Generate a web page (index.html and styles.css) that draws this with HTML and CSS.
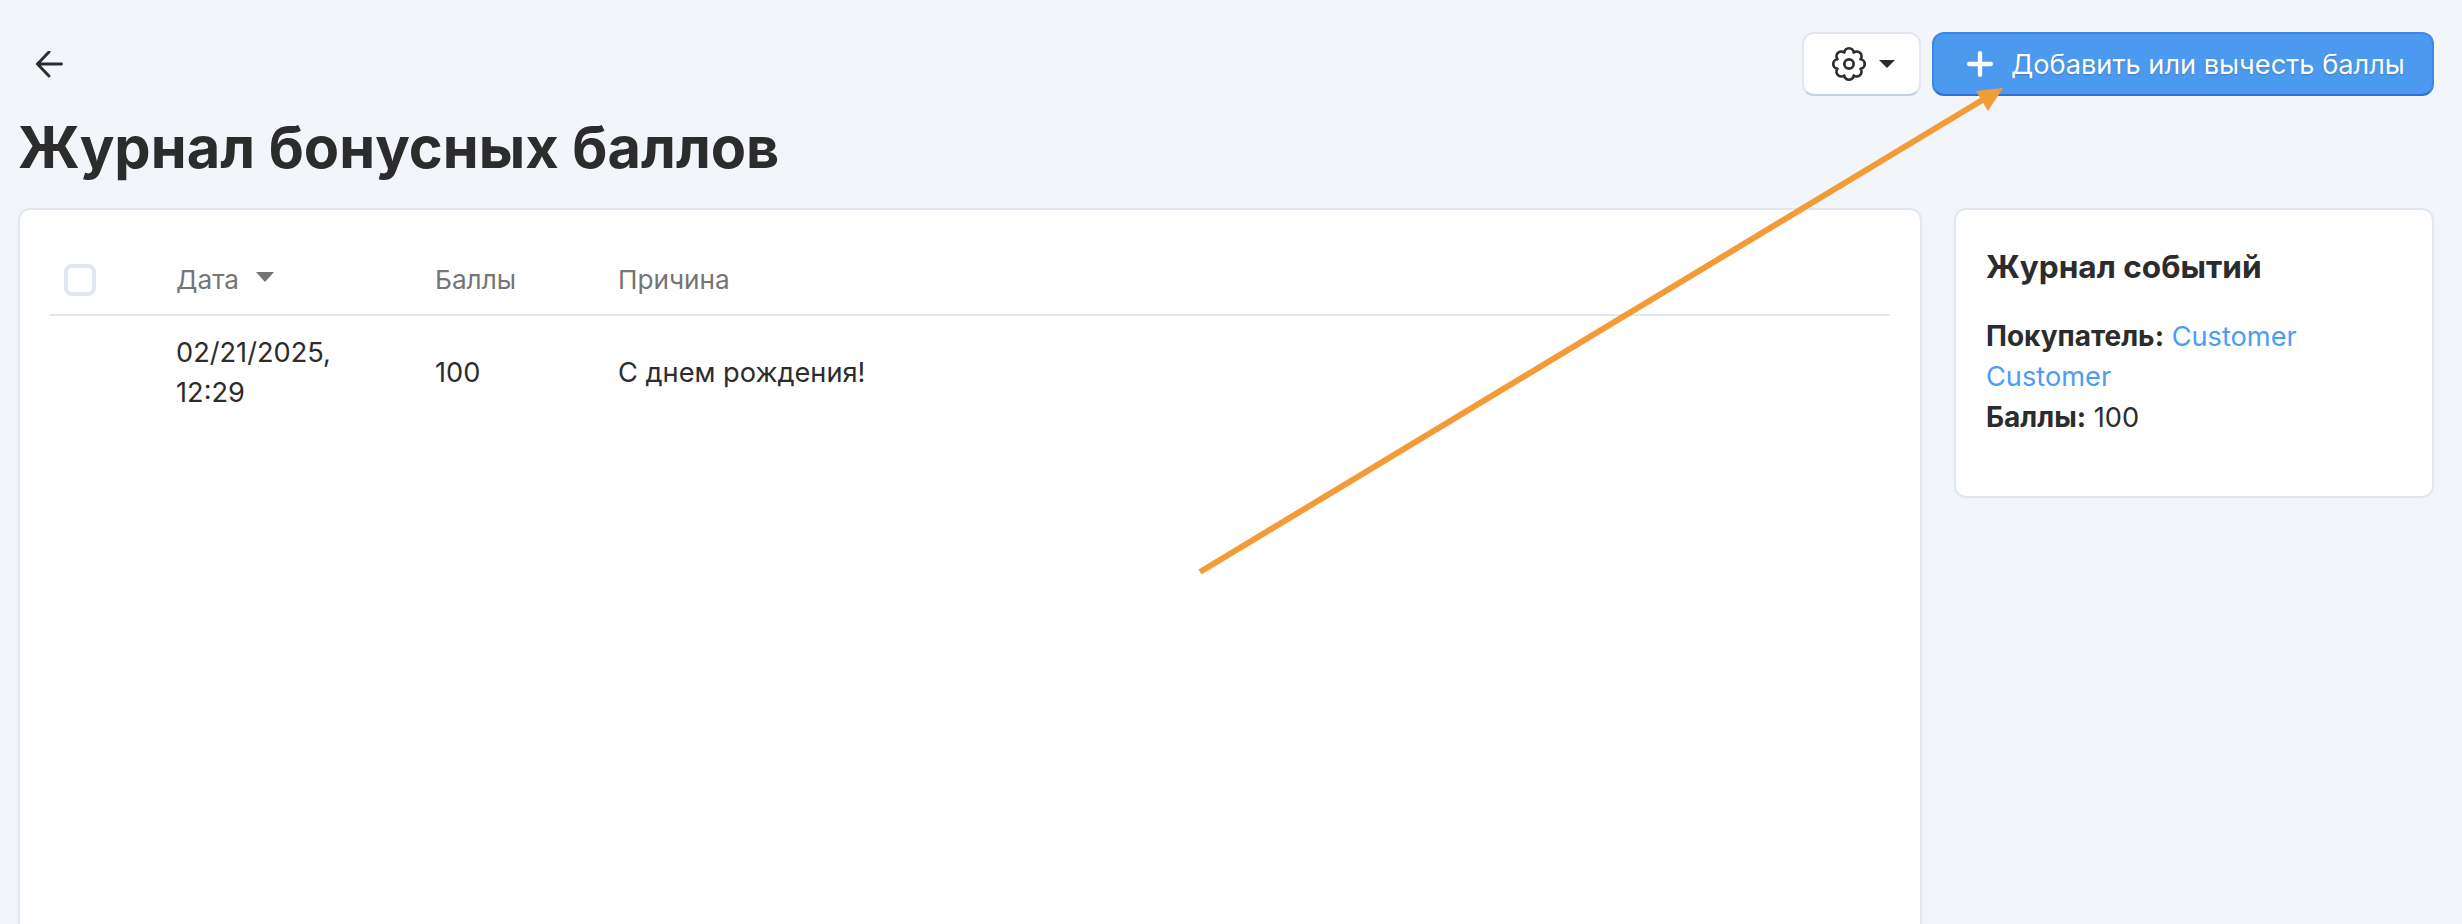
FILE: index.html
```html
<!DOCTYPE html>
<html lang="ru">
<head>
<meta charset="utf-8">
<title>Журнал бонусных баллов</title>
<link rel="stylesheet" href="styles.css">
</head>
<body>
<div class="page">
  <header class="topbar">
    <a class="back" href="#" aria-label="Назад">
      <svg class="back-icon" viewBox="0 0 28 28" fill="none" stroke="currentColor" stroke-width="3" stroke-linecap="round" stroke-linejoin="round"><path d="M27 13.5H2M14 1 2 13.5 14 26"/></svg>
    </a>
    <div class="actions">
      <button class="btn btn-settings" aria-label="Настройки">
        <svg class="gear" viewBox="0 0 24 24" fill="none" stroke="currentColor" stroke-width="1.8" stroke-linejoin="round"><path d="M19.67 8.82A3.2 3.2 0 0 1 19.67 15.18 3.2 3.2 0 0 1 15.18 19.67 3.2 3.2 0 0 1 8.82 19.67 3.2 3.2 0 0 1 4.33 15.18 3.2 3.2 0 0 1 4.33 8.82 3.2 3.2 0 0 1 8.82 4.33 3.2 3.2 0 0 1 15.18 4.33 3.2 3.2 0 0 1 19.67 8.82Z"/><circle cx="12" cy="12" r="3.1"/></svg>
        <span class="caret"></span>
      </button>
      <button class="btn btn-primary">
        <svg class="plus" viewBox="0 0 24 24" fill="none" stroke="currentColor" stroke-width="4" stroke-linecap="round"><path d="M12 2v20M2 12h20"/></svg>
        <span class="btn-label">Добавить или вычесть баллы</span>
      </button>
    </div>
  </header>

  <h1 class="title">Журнал бонусных баллов</h1>

  <div class="layout">
    <main class="card card-main">
      <table class="log">
        <colgroup>
          <col class="col-check"><col class="col-date"><col class="col-points"><col>
        </colgroup>
        <thead>
          <tr>
            <th><span class="checkbox"></span></th>
            <th><span class="sort">Дата <span class="sort-caret"></span></span></th>
            <th>Баллы</th>
            <th>Причина</th>
          </tr>
        </thead>
        <tbody>
          <tr>
            <td></td>
            <td>02/21/2025,<br>12:29</td>
            <td>100</td>
            <td>С днем рождения!</td>
          </tr>
        </tbody>
      </table>
    </main>
    <aside class="card card-side">
      <h2 class="side-title">Журнал событий</h2>
      <p class="side-text"><strong>Покупатель:</strong> <a href="#">Customer Customer</a><br><strong>Баллы:</strong> 100</p>
    </aside>
  </div>

  <svg class="annotation" viewBox="0 0 2462 924" aria-hidden="true">
    <line x1="1200" y1="572" x2="1984" y2="99" stroke="#f39c37" stroke-width="6"/>
    <polygon points="1976,91 2003,88 1988,111" fill="#f39c37"/>
  </svg>
</div>
</body>
</html>
```

FILE: styles.css
```css
* { box-sizing: border-box; }

html, body {
  margin: 0;
  height: 924px;
  overflow: hidden;
}

body {
  background: #f2f5fa;
  color: #2c2c2c;
  font-family: Inter, "Liberation Sans", sans-serif;
  font-size: 27.2px;
  line-height: 40px;
}

.page {
  position: relative;
  height: 924px;
  padding: 32px 28px 0 18px;
  overflow: hidden;
}

.topbar {
  display: flex;
  align-items: center;
  justify-content: space-between;
  height: 64px;
}

.back {
  display: flex;
  margin-left: 17px;
  color: #2c2c2c;
}

.back-icon {
  width: 28px;
  height: 27px;
}

.actions {
  display: flex;
  gap: 11px;
}

.btn {
  display: flex;
  align-items: center;
  height: 64px;
  border-radius: 12px;
  font: inherit;
  padding: 0;
}

.btn-settings {
  width: 119px;
  justify-content: center;
  gap: 12px;
  padding-left: 2px;
  background: #fff;
  color: #2c2c2c;
  border: 2px solid #e1e7f1;
  border-bottom-color: #c3cfe3;
}

.gear {
  width: 36px;
  height: 36px;
}

.caret {
  width: 0;
  height: 0;
  border-left: 8px solid transparent;
  border-right: 8px solid transparent;
  border-top: 8px solid #2c2c2c;
}

.btn-primary {
  width: 502px;
  padding-left: 33px;
  gap: 18px;
  background: #4c9aef;
  color: #fff;
  border: 2px solid #4c9aef;
  border-color: #3f86e6 #3f86e6 #2f6fd6;
  font-size: 27.2px;
  text-shadow: 0 1px 2px rgba(0, 0, 0, 0.2);
}

.btn-label {
  padding-top: 2px;
}

.plus {
  width: 26px;
  height: 26px;
}

.title {
  margin: 17px 0 27px;
  font-size: 57.7px;
  line-height: 68px;
  font-weight: 700;
}

.layout {
  display: grid;
  grid-template-columns: 1fr 480px;
  gap: 32px;
  align-items: start;
}

.card {
  background: #fff;
  border: 2px solid #e1e7f1;
  border-radius: 12px;
}

.card-main {
  height: 760px;
  padding: 30px;
}

.log {
  width: 100%;
  border-collapse: collapse;
  table-layout: fixed;
}

.col-check { width: 110px; }
.col-date { width: 259px; }
.col-points { width: 183px; }

.log th {
  height: 75px;
  padding: 6px 16px 0;
  border-bottom: 2px solid #e1e7f1;
  font-weight: 400;
  font-size: 26.2px;
  color: #757575;
  text-align: left;
}

.log td {
  padding: 17px 16px 15px;
  vertical-align: middle;
}

.checkbox {
  display: block;
  width: 32px;
  height: 32px;
  margin-left: -2px;
  border: 4px solid #e1e7f1;
  border-radius: 8px;
}

.sort {
  display: inline-flex;
  align-items: center;
  gap: 17px;
}

.sort-caret {
  width: 0;
  height: 0;
  margin-top: -6px;
  border-left: 9px solid transparent;
  border-right: 9px solid transparent;
  border-top: 10px solid #757575;
}

.card-side {
  height: 290px;
  padding: 33px 30px 0;
}

.side-title {
  margin: 0 0 25px;
  font-size: 31.6px;
  line-height: 48px;
  font-weight: 700;
}

.side-text {
  margin: 0;
}

.side-text strong {
  font-size: 28px;
  font-weight: 700;
}

.side-text a {
  color: #4a9cf5;
  text-decoration: none;
}

.annotation {
  position: absolute;
  inset: 0;
  width: 2462px;
  height: 924px;
  pointer-events: none;
}
```
